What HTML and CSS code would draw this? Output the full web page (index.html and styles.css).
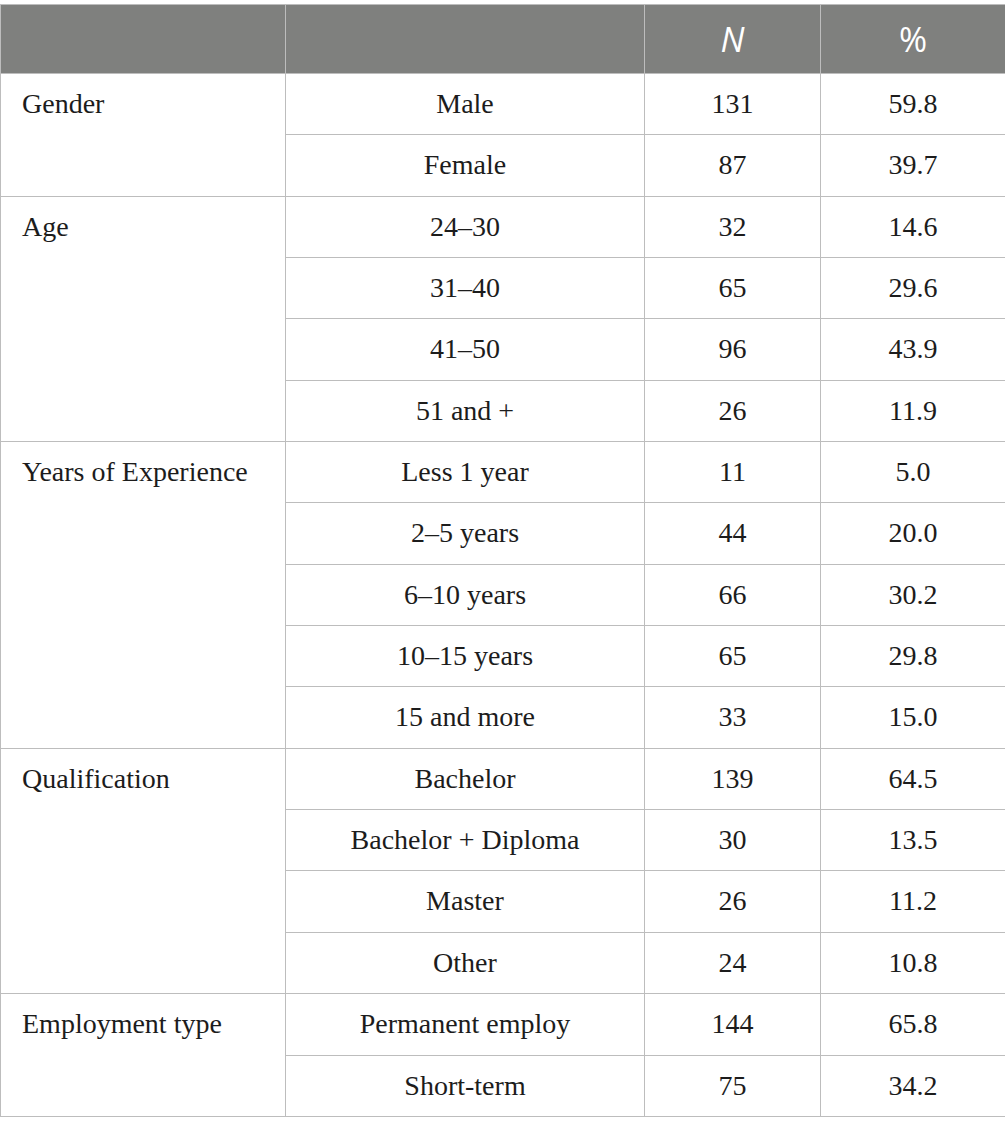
FILE: index.html
```html
<!DOCTYPE html>
<html>
<head>
<meta charset="utf-8">
<link rel="stylesheet" href="styles.css">
</head>
<body>
<table class="demo">
  <colgroup>
    <col class="c1"><col class="c2"><col class="c3"><col class="c4">
  </colgroup>
  <thead>
    <tr><th></th><th></th><th class="ital">N</th><th>%</th></tr>
  </thead>
  <tbody>
    <tr><td class="grp" rowspan="2">Gender</td><td>Male</td><td>131</td><td>59.8</td></tr>
    <tr><td>Female</td><td>87</td><td>39.7</td></tr>
    <tr><td class="grp" rowspan="4">Age</td><td>24–30</td><td>32</td><td>14.6</td></tr>
    <tr><td>31–40</td><td>65</td><td>29.6</td></tr>
    <tr><td>41–50</td><td>96</td><td>43.9</td></tr>
    <tr><td>51 and +</td><td>26</td><td>11.9</td></tr>
    <tr><td class="grp" rowspan="5">Years of Experience</td><td>Less 1 year</td><td>11</td><td>5.0</td></tr>
    <tr><td>2–5 years</td><td>44</td><td>20.0</td></tr>
    <tr><td>6–10 years</td><td>66</td><td>30.2</td></tr>
    <tr><td>10–15 years</td><td>65</td><td>29.8</td></tr>
    <tr><td>15 and more</td><td>33</td><td>15.0</td></tr>
    <tr><td class="grp" rowspan="4">Qualification</td><td>Bachelor</td><td>139</td><td>64.5</td></tr>
    <tr><td>Bachelor + Diploma</td><td>30</td><td>13.5</td></tr>
    <tr><td>Master</td><td>26</td><td>11.2</td></tr>
    <tr><td>Other</td><td>24</td><td>10.8</td></tr>
    <tr><td class="grp" rowspan="2">Employment type</td><td>Permanent employ</td><td>144</td><td>65.8</td></tr>
    <tr><td>Short-term</td><td>75</td><td>34.2</td></tr>
  </tbody>
</table>
</body>
</html>
```
FILE: styles.css
```css
html, body {
  margin: 0;
  padding: 0;
  background: #ffffff;
}
body {
  padding-top: 4px;
}
.demo {
  width: 1005px;
  table-layout: fixed;
  border-collapse: collapse;
  font-family: "Liberation Serif", "Times New Roman", serif;
  font-size: 28px;
  color: #1c1c1c;
}
.c1 { width: 285px; }
.c2 { width: 359px; }
.c3 { width: 176px; }
.c4 { width: 185px; }
.demo th,
.demo td {
  border: 1px solid #bdbdbd;
  padding: 0;
}
.demo thead th {
  background: #7f807e;
  color: #ffffff;
  font-family: "Open Sans", "Liberation Sans", sans-serif;
  font-weight: 400;
  font-size: 34px;
  height: 68px;
  line-height: 40px;
  text-align: center;
  vertical-align: middle;
  padding-top: 0;
}
.demo thead th.ital {
  font-style: italic;
}
.demo tbody tr {
  height: 61.35px;
}
.demo tbody td {
  text-align: center;
  vertical-align: top;
  line-height: 60px;
  white-space: nowrap;
}
.demo tbody td.grp {
  text-align: left;
  padding-left: 21px;
}
```
